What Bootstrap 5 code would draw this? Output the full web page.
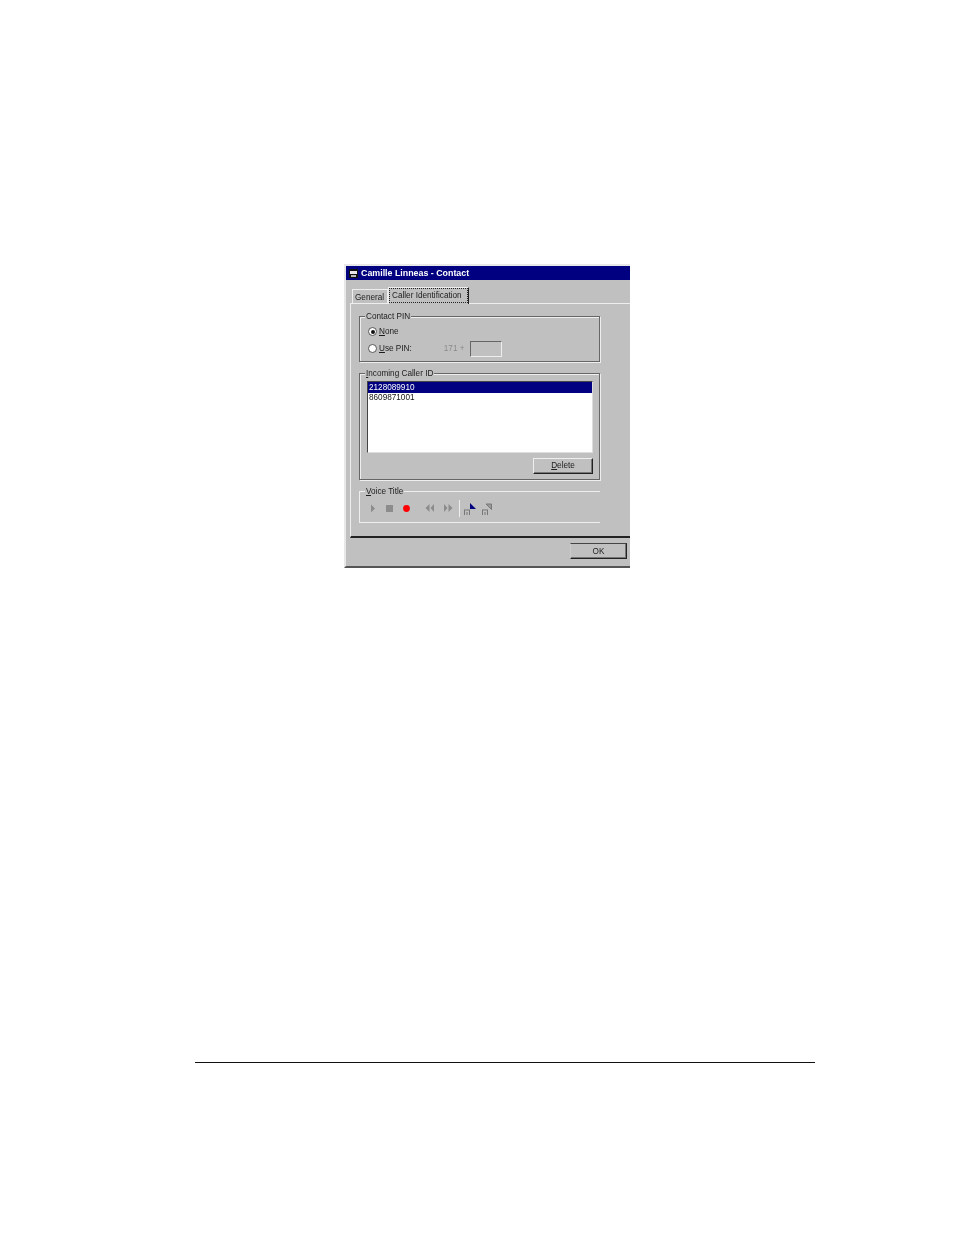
<!DOCTYPE html>
<html lang="en"><head><meta charset="utf-8"><title>Camille Linneas - Contact</title>
<link href="https://cdn.jsdelivr.net/npm/bootstrap@5.3.0/dist/css/bootstrap.min.css" rel="stylesheet">
<style>
html,body{height:1235px;overflow:hidden}
body{background:#fff;font-family:"Liberation Sans",Arial,sans-serif;font-size:8.2px;line-height:10px;color:#1c1c1c}
.sheet{padding-top:264px}
.dlg{width:286px;height:304px;margin-left:344px;background:#c0c0c0;border-left:2px solid #e8e8e8;border-top:2px solid #e8e8e8;border-bottom:2px solid #555;display:flex;flex-direction:column;filter:blur(.25px)}
.dlgtitle{height:14px;background:#000080;color:#fff;font-weight:700;font-size:8.85px;padding-left:3px;gap:3px;flex:none}
.tabrow{height:23px;padding-left:6px;flex:none;align-items:flex-end}
.tabidle{height:14px;width:36px;padding-left:2px;border:1px solid #eee;border-bottom:0;line-height:15px;white-space:nowrap}
.tabon{height:17px;width:81px;margin-bottom:-1px;background:#c0c0c0;z-index:1;border:1px solid #eee;border-bottom:0;border-right:1.5px solid #222;padding-left:0;white-space:nowrap}
.tabon span{display:block;border:1px dotted #222;height:15px;padding-left:2px;line-height:14px}
.pane{height:235px;flex:none;margin-left:4px;border-left:1px solid #eee;border-top:1px solid #eee;padding:12px 30px 0 8px;border-bottom:2px solid #222;display:flex;flex-direction:column}
.grp{position:relative;border:1px solid #666;box-shadow:1px 1px 0 #eee,inset 1px 1px 0 #eee;flex:none}
.grpname{position:absolute;top:-5px;left:5px;background:#c0c0c0;padding:0 1px;white-space:nowrap}
.grpa{height:46px;padding:9px 0 0 8px}
.grpb{height:107px;margin-top:11px;padding:7px 6px 0 7px}
.grpc{height:32px;margin-top:11px;border:0;border-top:1px solid #eee;border-bottom:1px solid #eee;border-left:1px solid #eee;box-shadow:none;padding:7px 0 0 10px}
.rad{width:9px;height:9px;border-radius:50%;background:#fff;border:1px solid #555;margin-right:2px;display:inline-flex;align-items:center;justify-content:center;flex:none}
.rad i{width:4px;height:4px;border-radius:50%;background:#111;display:block}
.opt1{height:11px}
.opt2{margin-top:3px;height:17px}
.muted1{color:#8a8a8a;margin-left:32px;margin-right:5px}
.pinbox{width:32px;height:16px;border:1px solid #666;border-right-color:#eee;border-bottom-color:#eee}
.lbox{height:72px;background:#fff;border:1.5px solid #444;border-right-color:#ddd;border-bottom-color:#ddd;color:#111}
.lsel{background:#000080;color:#fff;height:11px;padding-left:1px;line-height:12px}
.lrow{height:10px;padding-left:1px;line-height:10px}
.wbtn{background:#c0c0c0;font-size:8.2px;border:1px solid #222;border-top-color:#eee;border-left-color:#eee;box-shadow:inset -1px -1px 0 #777;text-align:center;color:#222;border-radius:0;padding:0}
.btnd{width:60px;height:16px;margin-top:5px;line-height:14px;margin-left:auto}
.foot{flex:1 1 auto;padding:5px 3px 0 0;justify-content:flex-end;display:flex}
.btno{width:57px;height:16px;line-height:13px;border:1.5px solid #222;border-top-color:#444;border-left-color:#ccc}
.vtool{gap:0;align-items:center;height:18px}
.vtool svg{display:block;flex:none}
.vsep{width:1px;height:17px;background:#eee;margin:0 4px 0 6px;flex:none}
.gap1{width:10px;flex:none}.gap2{width:15px;flex:none}.gap3{width:8px;flex:none}.gap4{width:4px;flex:none}
.rulewrap{margin-top:494px;margin-left:195px;width:620px;height:1px;background:#111}
u{text-decoration-thickness:1px}
</style></head><body>
<div class="sheet">
 <div class="dlg">
  <div class="dlgtitle d-flex align-items-center">
   <svg width="9" height="9" viewBox="0 0 9 9"><rect width="9" height="9" fill="#111"/><rect x="1" y="2" width="7" height="3" fill="#e8e8e8"/><rect x="2" y="6" width="5" height="2" fill="#bbb"/></svg>
   <span>Camille Linneas - Contact</span>
  </div>
  <div class="tabrow d-flex">
   <div class="tabidle">General</div>
   <div class="tabon"><span>Caller Identification</span></div>
  </div>
  <div class="pane">
   <div class="grp grpa">
    <div class="grpname">Contact PIN</div>
    <div class="opt1 d-flex align-items-center"><span class="rad"><i></i></span><span><u>N</u>one</span></div>
    <div class="opt2 d-flex align-items-center"><span class="rad"></span><span><u>U</u>se PIN:</span><span class="muted1">171 +</span><span class="pinbox"></span></div>
   </div>
   <div class="grp grpb">
    <div class="grpname"><u>I</u>ncoming Caller ID</div>
    <div class="lbox"><div class="lsel">2128089910</div><div class="lrow">8609871001</div></div>
    <button type="button" class="btn wbtn btnd d-block"><u>D</u>elete</button>
   </div>
   <div class="grp grpc">
    <div class="grpname"><u>V</u>oice Title</div>
    <div class="vtool d-flex">
     <svg width="6" height="9" viewBox="0 0 6 9"><path d="M1 0.5 5 4.5 1 8.5Z" fill="#8c8c8c"/></svg>
     <div class="gap1"></div>
     <svg width="7" height="7" viewBox="0 0 7 7"><rect width="7" height="7" fill="#8c8c8c"/></svg>
     <div class="gap1"></div>
     <svg width="7" height="7" viewBox="0 0 7 7"><circle cx="3.5" cy="3.5" r="3.4" fill="#f00"/></svg>
     <div class="gap2"></div>
     <svg width="10" height="8" viewBox="0 0 10 8"><path d="M4.5 0 0.5 4 4.5 8Z M9 0 5.5 4 9 8Z" fill="#8c8c8c"/></svg>
     <div class="gap3"></div>
     <svg width="10" height="8" viewBox="0 0 10 8"><path d="M1 0 4.5 4 1 8Z M5.5 0 9.5 4 5.5 8Z" fill="#8c8c8c"/></svg>
     <div class="vsep"></div>
     <svg width="13" height="14" viewBox="0 0 13 14"><path d="M6 2 12 8H6Z" fill="#000080"/><path d="M0 9H6M0.5 9V14M3 11V14M5.5 9V14" stroke="#777" fill="none"/></svg>
     <div class="gap4"></div>
     <svg width="15" height="14" viewBox="0 0 15 14"><path d="M5 3H10.5V8.5Z" fill="#9a9a9a" stroke="#777"/><path d="M1 9H7M1.5 9V14M4 11V14M6.5 9V14" stroke="#777" fill="none"/></svg>
    </div>
   </div>
  </div>
  <div class="foot"><button type="button" class="btn wbtn btno">OK</button></div>
 </div>
 <div class="rulewrap"></div>
</div>
</body></html>
